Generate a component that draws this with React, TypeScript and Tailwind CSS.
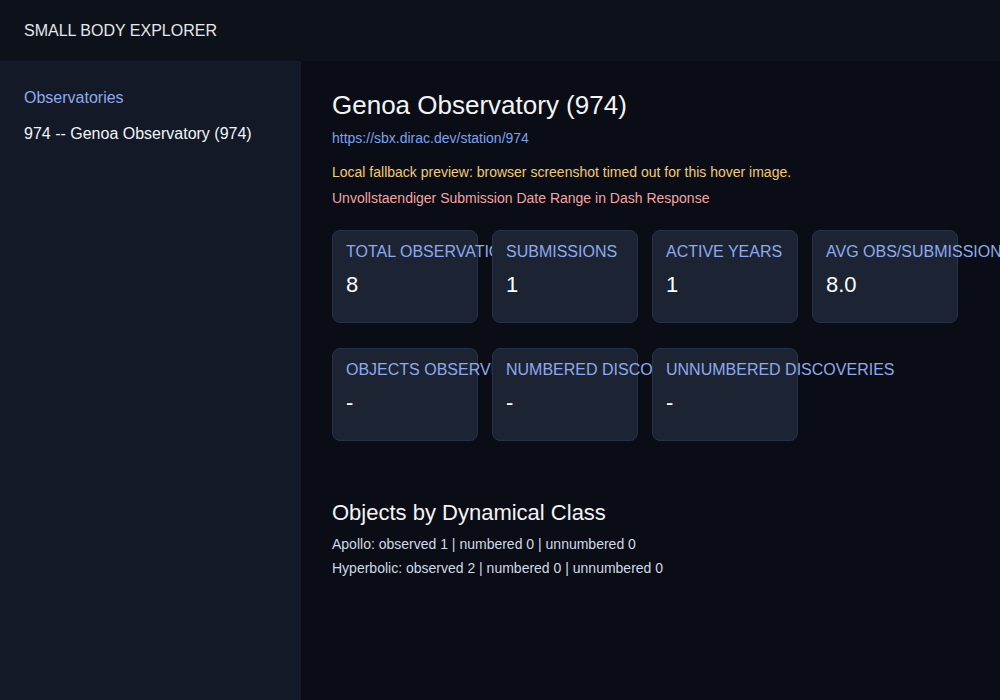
import React from 'react';

type Stat = { label: string; value: string };

const topStats: Stat[] = [
  { label: 'TOTAL OBSERVATIONS', value: '8' },
  { label: 'SUBMISSIONS', value: '1' },
  { label: 'ACTIVE YEARS', value: '1' },
  { label: 'AVG OBS/SUBMISSION', value: '8.0' },
];

const discoveryStats: Stat[] = [
  { label: 'OBJECTS OBSERVED', value: '-' },
  { label: 'NUMBERED DISCOVERIES', value: '-' },
  { label: 'UNNUMBERED DISCOVERIES', value: '-' },
];

const classes = [
  { name: 'Apollo', observed: 1, numbered: 0, unnumbered: 0 },
  { name: 'Hyperbolic', observed: 2, numbered: 0, unnumbered: 0 },
];

function StatCard({ stat }: { stat: Stat }) {
  return (
    <div className="w-[146px] h-[93px] shrink-0 rounded-lg border border-[#24324a] bg-[#1c2434] px-[13px] pt-[9px]">
      <p className="whitespace-nowrap text-base leading-6 text-[#8fa9ec]">{stat.label}</p>
      <p className="mt-[7px] text-[22px] leading-7 text-white">{stat.value}</p>
    </div>
  );
}

export default function App() {
  return (
    <div className="flex h-[700px] w-[1000px] flex-col overflow-hidden bg-[#0a0d15] font-['Liberation_Sans',Arial,sans-serif] text-white">
      <header className="flex h-[61px] shrink-0 items-center bg-[#0c111a] px-6 pt-px">
        <h1 className="text-base text-[#e5e7eb]">SMALL BODY EXPLORER</h1>
      </header>

      <div className="flex flex-1">
        <aside className="w-[301px] shrink-0 bg-[#131926] px-6 pt-[25px]">
          <p className="text-base leading-6 text-[#8fa9ec]">Observatories</p>
          <p className="mt-3 text-base leading-6 text-[#f1f5f9]">974 -- Genoa Observatory (974)</p>
        </aside>

        <main className="flex-1 overflow-hidden pl-[31px] pt-[28px]">
          <h2 className="text-[26px] leading-8 text-[#f3f4f6]">Genoa Observatory (974)</h2>
          <a className="mt-[7px] block text-sm leading-5 text-[#7ea2ec]">https://sbx.dirac.dev/station/974</a>
          <p className="mt-[14px] text-sm leading-5 text-[#f3c97a]">Local fallback preview: browser screenshot timed out for this hover image.</p>
          <p className="mt-[6px] text-sm leading-5 text-[#f2a4a4]">Unvollstaendiger Submission Date Range in Dash Response</p>

          <div className="mt-[22px] flex gap-[14px]">
            {topStats.map(s => (
              <StatCard key={s.label} stat={s} />
            ))}
          </div>
          <div className="mt-[25px] flex gap-[14px]">
            {discoveryStats.map(s => (
              <StatCard key={s.label} stat={s} />
            ))}
          </div>

          <h3 className="mt-[58px] text-[22px] leading-7 text-[#f3f4f6]">Objects by Dynamical Class</h3>
          <div className="mt-[5px] text-sm leading-6 text-[#d1d9e6]">
            {classes.map(c => (
              <p key={c.name}>
                {c.name}: observed {c.observed} | numbered {c.numbered} | unnumbered {c.unnumbered}
              </p>
            ))}
          </div>
        </main>
      </div>
    </div>
  );
}
